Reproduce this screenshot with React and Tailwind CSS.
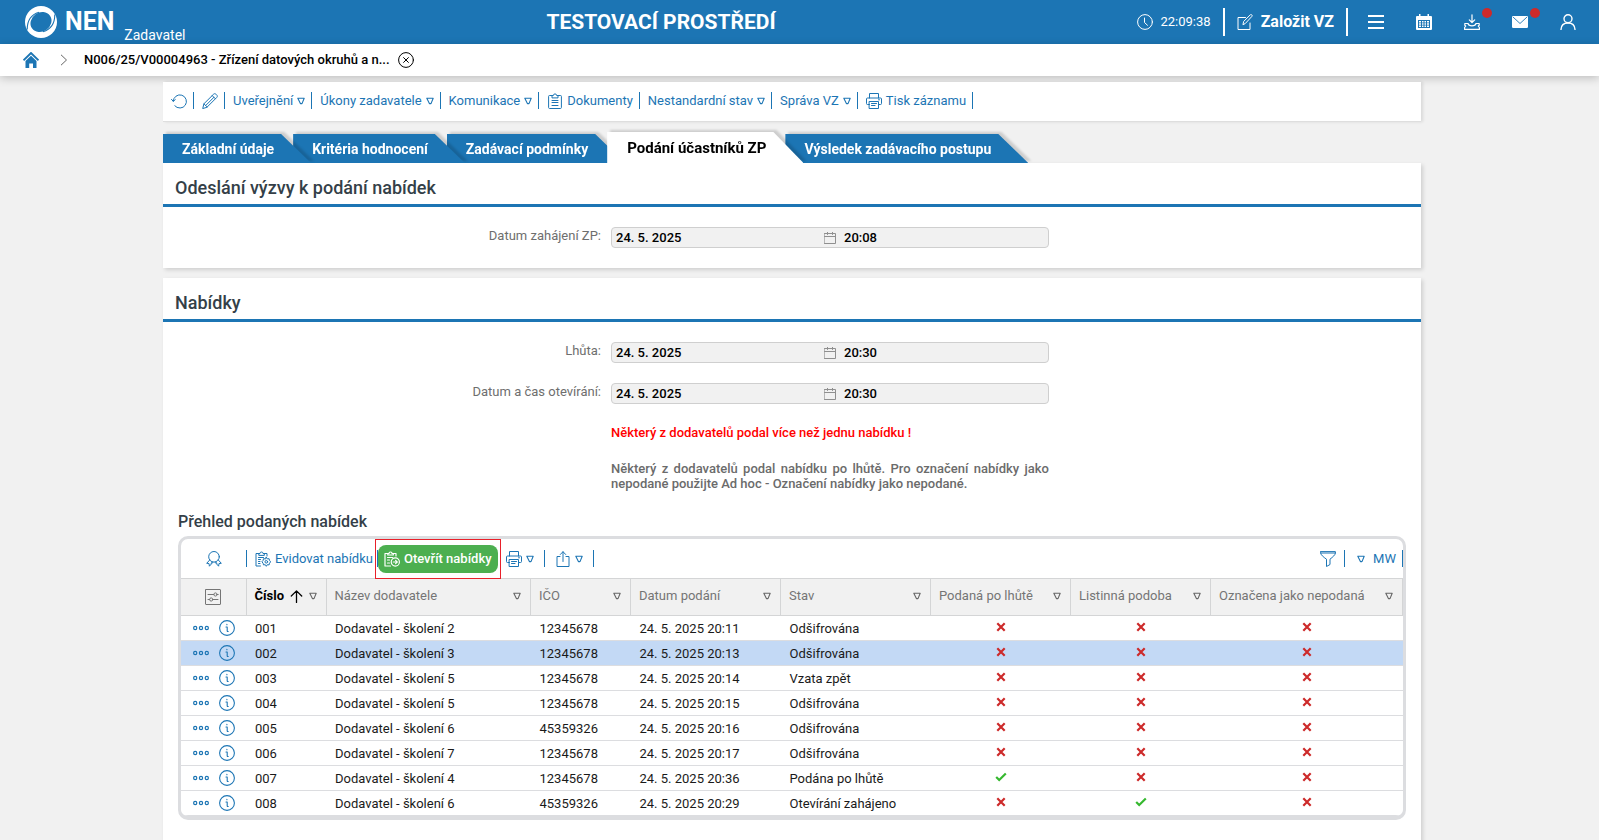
import React from "react";

const LINE = { fill: "none", stroke: "currentColor", strokeLinecap: "round", strokeLinejoin: "round" };

function Icon({ children, size = 16, sw = 1, className = "", box = 16 }) {
  return (
    <svg
      width={size}
      height={size}
      viewBox={`0 0 ${box} ${box}`}
      strokeWidth={sw}
      aria-hidden="true"
      className={`shrink-0 ${className}`}
      {...LINE}
    >
      {children}
    </svg>
  );
}

function Triangle({ className = "" }) {
  return (
    <svg width="8" height="8" viewBox="0 0 8 8" aria-hidden="true" className={`shrink-0 ${className}`} fill="none" stroke="currentColor" strokeWidth="1.1" strokeLinejoin="round">
      <path d="M0.8 1.2h6.4L5 6.6H3.4z" />
    </svg>
  );
}

const Refresh = () => (
  <Icon>
    <path d="M2.2 8.2a6.6 6.6 0 1 1 1.6 4.6" />
    <path d="M0.5 6.4l1.8 2 2-1.8" />
  </Icon>
);
const Pencil = () => (
  <Icon>
    <path d="M0.8 15.2l1.1-4.4L11.6 1.2c.7-.7 1.6-.7 2.3 0l.9.9c.7.7.7 1.6 0 2.3L5.2 14z" />
    <path d="M1.9 10.8L5.2 14M10.2 2.6l3.2 3.2M3.8 12.4L12 4.2" />
  </Icon>
);
const Clipboard = () => (
  <Icon>
    <path d="M5 2.5H2.5a.9.9 0 0 0-.9.9v11.2c0 .5.4.9.9.9h11c.5 0 .9-.4.9-.9V3.4a.9.9 0 0 0-.9-.9H11" />
    <path d="M5 4.5v-2h1.4a1.6 1.6 0 0 1 3.2 0H11v2z" />
    <path d="M5 7.5h6M5 9.5h6M5 12.5h6" />
  </Icon>
);
const Printer = () => (
  <Icon>
    <path d="M3.5 5V.5h9V5M3.5 11.5h-2a1 1 0 0 1-1-1V6a1 1 0 0 1 1-1h13a1 1 0 0 1 1 1v4.500a1 1 0 0 1-1 1h-2" />
    <path d="M3.500 8.500h9v7h-9zM5.500 10.500h5M5.500 12.500h3.500M12.500 6.800h1" />
  </Icon>
);
const Ribbon = () => (
  <Icon>
    <circle cx="8" cy="5.8" r="5.300" />
    <path d="M3.700 9L.7 12.300l2.300.2.400 2.700 3.300-3.700M12.300 9l3 3.300-2.300.2-.4 2.700-3.300-3.700M6.200 11l-1 1.300M9.800 11l1 1.300" />
  </Icon>
);
const ClipGear = () => (
  <Icon>
    <path d="M3.500 2.500H1v12.500h4.500M9.500 2.500H12V5M3.800 4V2.500H5a1.500 1.500 0 0 1 3 0h1.300V4zM3.500 6.500h5M3.500 8.500h2M3.500 10.500h1.500M3.500 12.500h1.500" />
    <circle cx="11.300" cy="10.800" r="1.300" />
    <path d="M11.300 6.300l1 1.600 1.800-.2.400 1.700 1.200 1.400-1.200 1.400-.4 1.700-1.800-.2-1 1.600-1-1.600-1.800.2-.4-1.700-1.200-1.400 1.200-1.400.4-1.700 1.800.2z" />
  </Icon>
);
const ClipArrow = () => (
  <Icon sw={1.2}>
    <path d="M3.500 2.500H1v12.500h5.500M9.500 2.500H12V5M3.800 4V2.500H5a1.500 1.500 0 0 1 3 0h1.300V4zM3.500 6.500h5M3.500 9h2M3.500 12h2" />
    <circle cx="11.300" cy="11" r="4.100" />
    <path d="M9.300 11h3.800M11.600 9.400l1.700 1.600-1.700 1.600" />
  </Icon>
);
const Share = () => (
  <Icon>
    <path d="M5 5.500H2v10h12v-10h-3M8 10.500V.8M5.300 3.500L8 .7l2.700 2.800" />
  </Icon>
);
const Funnel = () => (
  <Icon>
    <path d="M.6.600h14.800v1.400c0 1.800-2.600 4-5.400 6.200v5.300l-3.500 2V8.200C3.400 6 .6 3.800.6 2zM.8 2h14.400" />
  </Icon>
);
const Sliders = () => (
  <Icon>
    <rect x="0.500" y="0.500" width="15" height="15" rx="0.500" />
    <path d="M3 5.500h5.800M12.200 5.500h1M3 10.500h1.500M7.800 10.500H13" />
    <circle cx="10.500" cy="5.500" r="1.600" />
    <circle cx="6.200" cy="10.500" r="1.600" />
  </Icon>
);
const SmallCalendar = () => (
  <Icon size={12} box={12} className="text-[#8f8f8f]">
    <path d="M.5 1.500h11v10H.5zM.5 4.500h11M3.500 0v2.500M8.500 0v2.500" />
  </Icon>
);
const Dots = () => (
  <Icon sw={1.2}>
    <circle cx="2.200" cy="8" r="1.600" />
    <circle cx="8" cy="8" r="1.600" />
    <circle cx="13.800" cy="8" r="1.600" />
  </Icon>
);
const Info = () => (
  <Icon sw={1.1}>
    <circle cx="8" cy="8" r="7.400" />
    <path d="M7 7h1.200v3.800c0 .6.400.8 1 .7M7.900 4.200v.6" />
  </Icon>
);

function Mark({ yes }) {
  return yes ? (
    <svg role="img" aria-label="Ano" width="12" height="10" viewBox="0 0 12 10" className="mx-auto block" fill="none" stroke="#36b82f" strokeWidth="2.200">
      <path d="M1.200 5l3 3L10.800 1.500" />
    </svg>
  ) : (
    <svg role="img" aria-label="Ne" width="10" height="10" viewBox="0 0 10 10" className="mx-auto block" fill="none" stroke="#cd2a2a" strokeWidth="2.200">
      <path d="M1.300 1.300l7.400 7.400M8.700 1.300L1.300 8.700" />
    </svg>
  );
}

function Logo() {
  return (
    <svg width="32" height="32" viewBox="0 0 32 32" aria-hidden="true" className="shrink-0">
      <circle cx="16" cy="16" r="16" fill="#fff" />
      <ellipse cx="16" cy="16" rx="11" ry="9.500" transform="rotate(-35 16 16)" fill="#1c75b4" />
      <path d="M2.200 23.500C2.200 15 6.500 8.500 14 6.300" fill="none" stroke="#1c75b4" strokeWidth="1.100" />
      <path d="M29.800 8.500C29.800 17 25.500 23.500 18 25.700" fill="none" stroke="#1c75b4" strokeWidth="1.100" />
    </svg>
  );
}

function Header() {
  return (
    <header className="flex h-11 items-center justify-between bg-[#1c75b4] pl-[25px] pr-[23px] text-white">
      <a href="#" className="flex items-center">
        <Logo />
        <span className="ml-2 text-[25px] font-bold leading-7">NEN</span>
        <span className="ml-2.5 mt-[26px] text-sm leading-4">Zadavatel</span>
      </a>
      <h1 className="text-[21px] font-bold leading-6">TESTOVACÍ PROSTŘEDÍ</h1>
      <div className="flex items-center">
        <Icon>
          <circle cx="8" cy="8" r="7.400" />
          <path d="M7.500 4v4.500l3 2.800" />
        </Icon>
        <time className="ml-2 text-[13px]">22:09:38</time>
        <span className="ml-3 h-7 w-0.5 bg-white" />
        <button type="button" className="ml-3 flex items-center gap-2 text-base font-bold">
          <Icon>
            <path d="M8.500 3.500H1v12h12V9M6 10.300l.7-2.900 6.500-6.500c.5-.5 1.100-.5 1.600 0s.5 1.100 0 1.600L8.500 9.300z" />
          </Icon>
          Založit VZ
        </button>
        <span className="ml-3 h-7 w-0.5 bg-white" />
        <nav aria-label="Uživatel" className="ml-5 flex items-center gap-8">
          <button type="button" aria-label="Menu">
            <Icon sw={2}>
              <path d="M0 2h16M0 8h16M0 14h16" strokeLinecap="butt" />
            </Icon>
          </button>
          <button type="button" aria-label="Kalendář">
            <svg width="16" height="16" viewBox="0 0 16 16" fill="currentColor" aria-hidden="true">
              <path d="M3 0h1.500v2h7V0H13v2h2a1 1 0 0 1 1 1v12a1 1 0 0 1-1 1H1a1 1 0 0 1-1-1V3a1 1 0 0 1 1-1h2z" />
              <path d="M2 6h12v8H2z" fill="#1c75b4" />
              <path d="M3 7h2v1.500H3zM6 7h1.500v1.500H6zM8.500 7H10v1.500H8.500zM11 7h2v1.500h-2zM3 9.300h2v1.500H3zM6 9.300h1.500v1.500H6zM8.500 9.300H10v1.500H8.500zM11 9.300h2v1.500h-2zM3 11.600h2v1.500H3zM6 11.600h1.500v1.500H6zM8.500 11.600H10v1.500H8.500zM11 11.600h2v1.500h-2z" />
            </svg>
          </button>
          <button type="button" aria-label="Stažené soubory" className="relative">
            <Icon sw={1.200}>
              <path d="M8 .8v7.400M5.300 5.800L8 8.500l2.700-2.700M4 9.500H.8v1.800l1 .7-1.200 1.500v1.900h14.800v-1.900L14.200 12l1-.7V9.500H12c-.3 1.300-1.600 2.300-4 2.300S4.300 10.800 4 9.500z" />
            </Icon>
            <span className="absolute -right-3 -top-1.5 h-2.5 w-2.5 rounded-full bg-[#cd2a2a]" />
          </button>
          <button type="button" aria-label="Zprávy" className="relative">
            <svg width="16" height="16" viewBox="0 0 16 16" fill="currentColor" aria-hidden="true">
              <rect x="0" y="2" width="16" height="12" rx="1.200" />
              <path d="M1 3l7 6.500L15 3" fill="none" stroke="#1c75b4" strokeWidth="0.900" />
            </svg>
            <span className="absolute -right-3 -top-1.5 h-2.5 w-2.5 rounded-full bg-[#cd2a2a]" />
          </button>
          <button type="button" aria-label="Profil">
            <Icon sw={1.400}>
              <circle cx="8" cy="4.800" r="4" />
              <path d="M1 15.500c.2-4 3-6.500 7-6.500s6.800 2.500 7 6.500" />
            </Icon>
          </button>
        </nav>
      </div>
    </header>
  );
}

function Breadcrumb() {
  return (
    <nav aria-label="Drobečková navigace" className="relative flex h-8 items-center bg-white pl-[23px] shadow-[0_2px_10px_rgba(0,0,0,0.22)]">
      <a href="#" aria-label="Domů" className="text-[#1c75b4]">
        <svg width="16" height="16" viewBox="0 0 16 16" aria-hidden="true">
          <path d="M.5 8.300L8 1l7.500 7.300" fill="none" stroke="currentColor" strokeWidth="1.900" />
          <path d="M2.500 9L8 3.800 13.500 9v7H10v-4.500H6.200V16H2.500z" fill="currentColor" />
        </svg>
      </a>
      <svg width="8" height="12" viewBox="0 0 8 12" aria-hidden="true" className="ml-[21px]" fill="none" stroke="#666">
        <path d="M1 .8L6.500 6 1 11.200" />
      </svg>
      <span className="ml-4 text-[13px] font-medium text-black">N006/25/V00004963 - Zřízení datových okruhů a n...</span>
      <button type="button" aria-label="Zavřít" className="ml-2 text-black">
        <Icon>
          <circle cx="8" cy="8" r="7.400" />
          <path d="M5.600 5.600l4.800 4.800M10.400 5.600l-4.800 4.800" />
        </Icon>
      </button>
    </nav>
  );
}

const actions = [
  { icon: <Refresh />, name: "Obnovit" },
  { icon: <Pencil />, name: "Upravit" },
  { text: "Uveřejnění", menu: true },
  { text: "Úkony zadavatele", menu: true },
  { text: "Komunikace", menu: true },
  { icon: <Clipboard />, text: "Dokumenty" },
  { text: "Nestandardní stav", menu: true },
  { text: "Správa VZ", menu: true },
  { icon: <Printer />, text: "Tisk záznamu" },
];

function ToolButton({ icon, text, menu, name, pad = "pl-2 pr-1.5" }) {
  return (
    <button
      type="button"
      aria-label={name}
      className={`flex h-[17px] items-center gap-1 whitespace-nowrap border-r border-[#1c75b4] text-[13px] leading-4 text-[#1c75b4] ${pad}`}
    >
      {icon}
      {text}
      {menu && <Triangle />}
    </button>
  );
}

function Tab({ text, active, z }) {
  return (
    <a
      href="#"
      aria-current={active ? "page" : undefined}
      className={`relative -mr-[18px] whitespace-nowrap drop-shadow-[3px_-2px_1px_rgba(0,0,0,0.15)] ${z}`}
    >
      <span
        className={`block [clip-path:polygon(0_0,calc(100%-30px)_0,100%_100%,0_100%)] ${
          active
            ? "h-[31px] bg-white pl-5 pr-[37px] text-[15px] font-bold leading-8 text-black"
            : "h-[29px] bg-[#1c75b4] pl-[19px] pr-[37px] text-[14px] font-bold leading-[30px] text-white"
        }`}
      >
        {text}
      </span>
    </a>
  );
}

function Panel({ title, children }) {
  return (
    <section className="bg-white shadow-[2px_2px_4px_rgba(0,0,0,0.14)]">
      <h2 className="h-11 border-b-3 border-[#1c75b4] pl-3 pt-[9px] text-[18px] font-medium leading-8 text-[#343f48]">{title}</h2>
      {children}
    </section>
  );
}

function DateField({ id, label, date, time }) {
  return (
    <div className="grid grid-cols-[438px_438px] gap-2.5">
      <label htmlFor={id} className="text-right text-[13px] leading-[18px] text-[#6e6e6e]">
        {label}
      </label>
      <div className="flex h-[21px] items-center rounded border border-[#cfcfcf] bg-[#f1f1f1] px-1 text-[13px] font-medium text-black">
        <input id={id} readOnly defaultValue={date} className="w-52 bg-transparent outline-none" />
        <SmallCalendar />
        <input aria-label={`${label} čas`} readOnly defaultValue={time} className="ml-2 w-40 bg-transparent outline-none" />
      </div>
    </div>
  );
}

const rows = [
  ["001", "Dodavatel - školení 2", "12345678", "24. 5. 2025 20:11", "Odšifrována", false, false, false],
  ["002", "Dodavatel - školení 3", "12345678", "24. 5. 2025 20:13", "Odšifrována", false, false, false],
  ["003", "Dodavatel - školení 5", "12345678", "24. 5. 2025 20:14", "Vzata zpět", false, false, false],
  ["004", "Dodavatel - školení 5", "12345678", "24. 5. 2025 20:15", "Odšifrována", false, false, false],
  ["005", "Dodavatel - školení 6", "45359326", "24. 5. 2025 20:16", "Odšifrována", false, false, false],
  ["006", "Dodavatel - školení 7", "12345678", "24. 5. 2025 20:17", "Odšifrována", false, false, false],
  ["007", "Dodavatel - školení 4", "12345678", "24. 5. 2025 20:36", "Podána po lhůtě", true, false, false],
  ["008", "Dodavatel - školení 6", "45359326", "24. 5. 2025 20:29", "Otevírání zahájeno", false, true, false],
];

const columns = ["Název dodavatele", "IČO", "Datum podání", "Stav", "Podaná po lhůtě", "Listinná podoba", "Označena jako nepodaná"];

function GridToolbar() {
  return (
    <div className="flex h-[39px] items-center text-[#1c75b4]">
      <button type="button" aria-label="Ocenění" className="flex h-[17px] w-[66px] items-center justify-center border-r border-[#1c75b4]">
        <Ribbon />
      </button>
      <ToolButton icon={<ClipGear />} text="Evidovat nabídku" pad="pl-2 pr-1" />
      <div className="relative">
        <button type="button" className="flex h-7 items-center gap-1 whitespace-nowrap rounded-lg bg-[#4caf50] px-1.5 text-[13px] font-medium text-white">
          <ClipArrow />
          Otevřít nabídky
        </button>
        <span className="pointer-events-none absolute -inset-x-[3px] -inset-y-1.5 border border-[#e8202a]" />
      </div>
      <ToolButton icon={<Printer />} name="Tisk" menu pad="pl-2 pr-2.5" />
      <ToolButton icon={<Share />} name="Export" menu pad="pl-2.5 pr-2.5" />
      <div className="ml-auto flex items-center">
        <ToolButton icon={<Funnel />} name="Filtr" pad="px-2" />
        <ToolButton icon={<><Triangle className="mr-1" />MW</>} pad="pl-3 pr-1.5" />
      </div>
    </div>
  );
}

function OffersTable() {
  return (
    <table className="w-full table-fixed border-collapse text-left text-[13px]">
      <colgroup>
        <col className="w-[65px]" />
        <col className="w-[80px]" />
        <col />
        <col className="w-[100px]" />
        <col className="w-[150px]" />
        <col className="w-[150px]" />
        <col className="w-[140px]" />
        <col className="w-[140px]" />
        <col className="w-[192px]" />
      </colgroup>
      <thead>
        <tr className="h-[37px] border-y border-[#d4d5d6] bg-[#f1f1f1] text-[#757575]">
          <th className="border-r border-[#d4d5d6] p-0">
            <button type="button" aria-label="Nastavení sloupců" className="mx-auto block">
              <Sliders />
            </button>
          </th>
          <th className="border-r border-[#d4d5d6] px-2 pb-0.5 pt-0 font-bold text-black">
            <span className="flex items-center justify-between">
              Číslo
              <Icon size={13} box={12} sw={1.200}>
                <path d="M6 11.500V.8M1.200 5.500L6 .8l4.800 4.700" />
              </Icon>
              <Triangle className="text-[#666]" />
            </span>
          </th>
          {columns.map((c) => (
            <th key={c} className="border-r border-[#d4d5d6] pb-0.5 pl-2 pr-[9px] pt-0 font-normal">
              <span className="flex items-center justify-between whitespace-nowrap">
                {c}
                <Triangle className="text-[#666]" />
              </span>
            </th>
          ))}
        </tr>
      </thead>
      <tbody className="text-[#1a1a1a]">
        {rows.map((r, i) => (
          <tr key={r[0]} className={`h-[25px] border-b border-[#dcdde0] ${i === 1 ? "bg-[#c3d9f5]" : ""}`}>
            <td className="p-0">
              <span className="flex items-center gap-2.5 pl-3 text-[#1c75b4]">
                <button type="button" aria-label={`Akce ${r[0]}`}>
                  <Dots />
                </button>
                <button type="button" aria-label={`Detail ${r[0]}`}>
                  <Info />
                </button>
              </span>
            </td>
            {r.slice(0, 5).map((v, j) => (
              <td key={j} className="whitespace-nowrap pb-0 pl-[9px] pr-2 pt-0.5 leading-4">
                {v}
              </td>
            ))}
            {r.slice(5).map((v, j) => (
              <td key={j} className="px-0 pb-0.5 pt-0">
                <Mark yes={v} />
              </td>
            ))}
          </tr>
        ))}
      </tbody>
    </table>
  );
}

export default function App() {
  return (
    <div className="min-h-screen bg-[#f1f1f1] font-[Roboto,sans-serif]">
      <Header />
      <Breadcrumb />
      <main className="pr-[15px] pt-1.5">
        <div className="mx-auto max-w-[1258px]">
          <div className="relative flex h-10 items-center border-b border-[#dedede] bg-white pb-0.5 shadow-[2px_0_3px_rgba(0,0,0,0.1)]">
            {actions.map((a) => (
              <ToolButton key={a.text || a.name} {...a} />
            ))}
          </div>
          <nav aria-label="Záložky" className="mt-2.5 flex h-[31px] items-end [clip-path:inset(-4px_0_0_0)]">
            <Tab text="Základní údaje" z="z-30" />
            <Tab text="Kritéria hodnocení" z="z-20" />
            <Tab text="Zadávací podmínky" z="z-10" />
            <Tab text="Podání účastníků ZP" z="z-40" active />
            <Tab text="Výsledek zadávacího postupu" z="z-0" />
          </nav>
          <Panel title="Odeslání výzvy k podání nabídek">
            <div className="py-5">
              <DateField id="start" label="Datum zahájení ZP:" date="24. 5. 2025" time="20:08" />
            </div>
          </Panel>
          <div className="h-2.5" />
          <Panel title="Nabídky">
            <div className="flex flex-col gap-5 pb-10 pt-5">
              <DateField id="deadline" label="Lhůta:" date="24. 5. 2025" time="20:30" />
              <DateField id="opening" label="Datum a čas otevírání:" date="24. 5. 2025" time="20:30" />
              <p className="ml-[448px] w-[438px] text-[13px] font-medium leading-[17px] text-[#ff0000]">
                Některý z dodavatelů podal více než jednu nabídku !
              </p>
              <p className="ml-[448px] w-[438px] text-justify text-[13px] font-medium leading-[15px] text-[#6b6b6b]">
                Některý z dodavatelů podal nabídku po lhůtě. Pro označení nabídky jako nepodané použijte Ad hoc - Označení nabídky jako nepodané.
              </p>
              <div className="px-[15px]">
                <h3 className="mb-[3px] text-base font-medium leading-[22px] text-[#343f48]">Přehled podaných nabídek</h3>
                <div className="overflow-hidden rounded-[10px] border-3 border-b-4 border-[#dcdde0]">
                  <GridToolbar />
                  <OffersTable />
                </div>
              </div>
            </div>
          </Panel>
        </div>
      </main>
    </div>
  );
}
